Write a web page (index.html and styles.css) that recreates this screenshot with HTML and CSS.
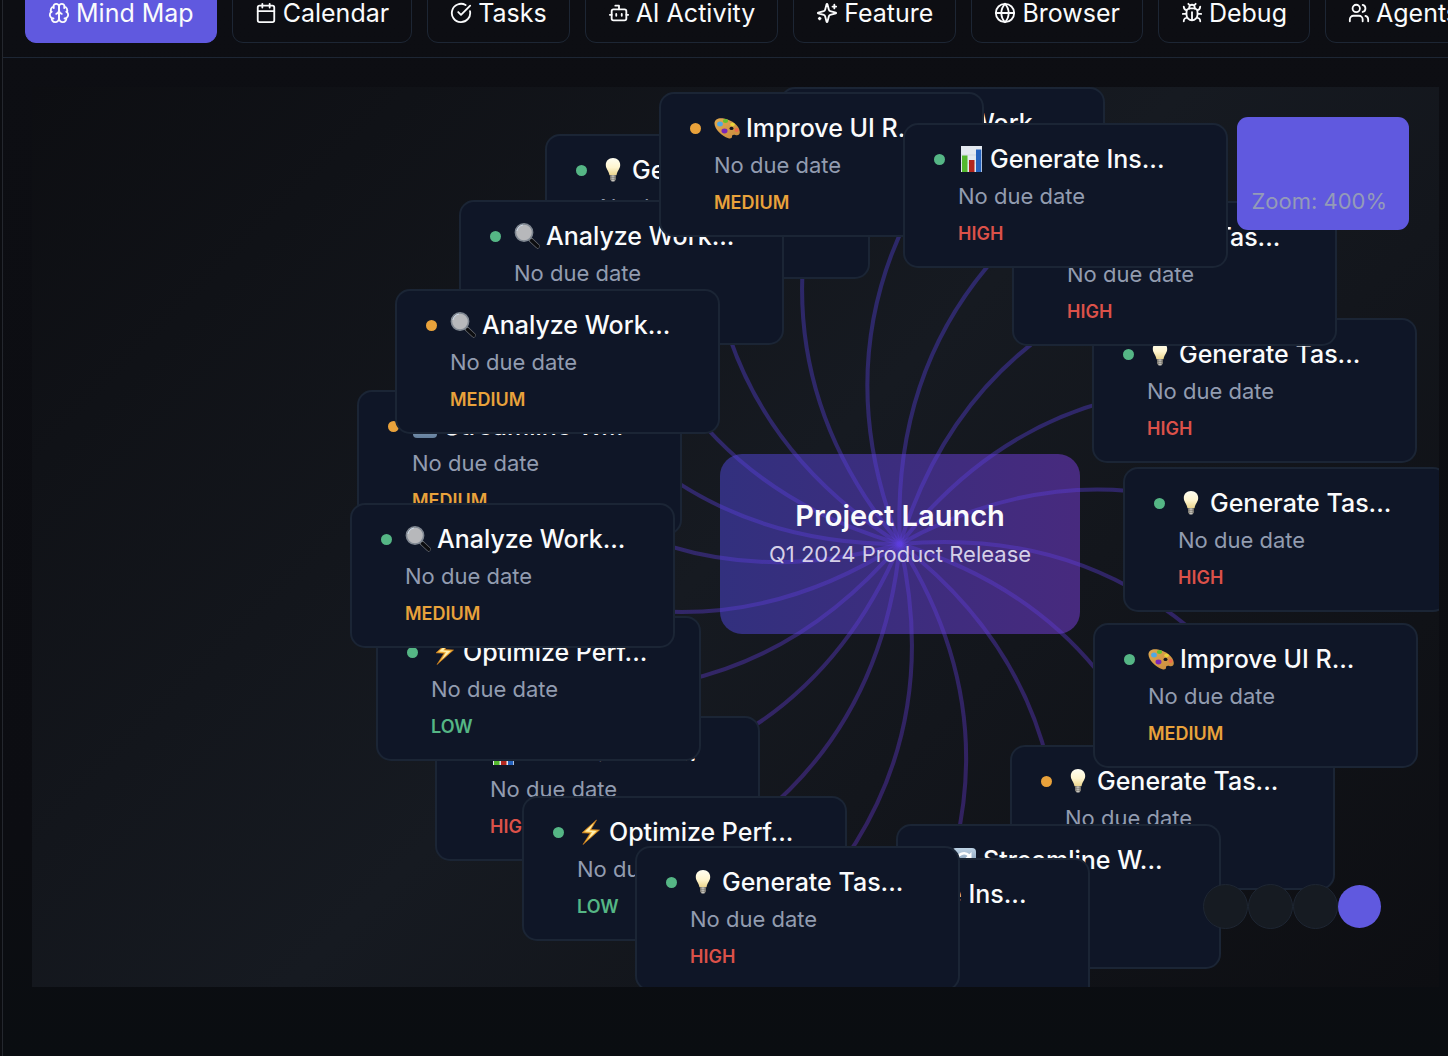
FILE: index.html
```html
<!DOCTYPE html>
<html lang="en">
<head>
<meta charset="utf-8">
<title>Mind Map</title>
<meta name="viewport" content="width=device-width, initial-scale=1">
<link rel="stylesheet" href="styles.css">
</head>
<body>
<svg class="defs" aria-hidden="true">
  <defs>
    <linearGradient id="glass" x1="0" y1="0" x2="0" y2="1"><stop offset="0" stop-color="#fffef2"/><stop offset=".55" stop-color="#fff5cf"/><stop offset="1" stop-color="#ecd58d"/></linearGradient>
    <linearGradient id="cap" x1="0" y1="0" x2="1" y2="0"><stop offset="0" stop-color="#77736a"/><stop offset=".5" stop-color="#d6d4cc"/><stop offset="1" stop-color="#6c6961"/></linearGradient>
    <linearGradient id="tile" x1="0" y1="0" x2="0" y2="1"><stop offset="0" stop-color="#bed3e6"/><stop offset="1" stop-color="#627d9b"/></linearGradient>
    <linearGradient id="wood" x1="0" y1="0" x2="1" y2="1"><stop offset="0" stop-color="#e0a94f"/><stop offset="1" stop-color="#c98b3d"/></linearGradient>
    <linearGradient id="spoke" gradientUnits="userSpaceOnUse" x1="0" y1="0" x2="0" y2="900"><stop offset="0" stop-color="#4c42e0"/><stop offset=".5" stop-color="#5d3ee0"/><stop offset="1" stop-color="#6a32c8"/></linearGradient>
    <symbol id="bulb" viewBox="0 0 26 26">
      <path d="M13 1C8.600 1 5.800 4.100 5.800 8c0 3.500 2.700 5.500 3.700 10.200h7C17.500 13.500 20.200 11.500 20.200 8 20.200 4.100 17.400 1 13 1z" fill="url(#glass)"/>
      <path d="M10 18.200h6v4.300l-1.600 2h-2.800l-1.600-2z" fill="url(#cap)"/>
      <path d="M10 20.300h6M10 22.300h6" stroke="#66635c" stroke-width=".6"/>
    </symbol>
    <symbol id="lens" viewBox="0 0 26 26">
      <path d="M16.500 16.500l7 6.700" stroke="#74777c" stroke-width="4.600" stroke-linecap="round"/>
      <path d="M17.500 17.500l6.200 5.800" stroke="#0c0d10" stroke-width="3.400" stroke-linecap="round"/>
      <circle cx="10" cy="9.500" r="8.600" fill="#b7b8bb" stroke="#808892" stroke-width="1.600"/>
      <path d="M3 8a7.600 7.600 0 0 1 6-6" stroke="#ccd8e6" stroke-width="1" fill="none"/>
    </symbol>
    <symbol id="chart" viewBox="0 0 26 26">
      <path d="M3 0h21v26H3z" fill="#e3e9f0"/>
      <path d="M3 9h21M3 17h21" stroke="#c9d2dc" stroke-width=".7"/>
      <path d="M4 9.500h5.500V26H4z" fill="#54b82e"/>
      <path d="M11 14h5.500v12H11z" fill="#b3261e"/>
      <path d="M18 3.500h5.300V26H18z" fill="#2562bd"/>
    </symbol>
    <symbol id="palette" viewBox="0 0 26 26">
      <path d="M.5 8.500C.5 4 5 2.500 10 3.500 18 5 25.800 11 25.800 17c0 3-2 3.800-4.500 3-2.200-.6-3.500.2-3.300 1.500.2 1.600-1.600 2.300-3.600 1.700C7.500 21 .5 14 .5 8.500z" fill="url(#wood)"/>
      <ellipse cx="6" cy="9" rx="2.900" ry="2.500" fill="#4fa8e4"/>
      <ellipse cx="11.500" cy="6" rx="2.600" ry="2" fill="#63c32f"/>
      <ellipse cx="18.500" cy="9.500" rx="2.300" ry="1.700" fill="#e8d43a"/>
      <ellipse cx="22.600" cy="15" rx="2" ry="1.900" fill="#ed6a4c"/>
      <ellipse cx="10.500" cy="16" rx="3" ry="2.400" fill="#7a27b8"/>
      <ellipse cx="17.500" cy="13.400" rx="2" ry="1.700" fill="#15151d"/>
    </symbol>
    <symbol id="bolt" viewBox="0 0 26 26">
      <path d="M19.500 1L5 13.800l8.200.4L6 25.500 22.500 11l-8.600-.5z" fill="#f4b63c" stroke="#c97a1c" stroke-width=".7"/>
      <path d="M16.500 4.500L8 12.600l7 .5-4 7.400 8.500-8.500-7.200-.5z" fill="#fff0b0"/>
    </symbol>
    <symbol id="cycle" viewBox="0 0 26 26">
      <rect x="1" y="1" width="24" height="24" rx="4" fill="url(#tile)"/>
      <path d="M6 14a7 7 0 0 1 12-5.500M20 12a7 7 0 0 1-12 5.500" fill="none" stroke="#fff" stroke-width="2.600"/>
      <path d="M20.500 5v6h-6zM5.500 21v-6h6z" fill="#fff"/>
    </symbol>
  </defs>
</svg>

<div class="app">
  <header class="topbar">
    <nav class="tabs" aria-label="Views">
      <button class="tab tab-active" type="button"><svg class="icon" viewBox="0 0 24 24"><path d="M12 5a3 3 0 1 0-5.997.125 4 4 0 0 0-2.526 5.770 4 4 0 0 0 .556 6.588A4 4 0 1 0 12 18Z"/><path d="M12 5a3 3 0 1 1 5.997.125 4 4 0 0 1 2.526 5.770 4 4 0 0 1-.556 6.588A4 4 0 1 1 12 18Z"/><path d="M15 13a4.500 4.500 0 0 1-3-4 4.500 4.500 0 0 1-3 4M17.599 6.500a3 3 0 0 0 .399-1.375M6.003 5.125A3 3 0 0 0 6.401 6.500M3.477 10.896a4 4 0 0 1 .585-.396M19.938 10.500a4 4 0 0 1 .585.396M6 18a4 4 0 0 1-1.967-.516M19.967 17.484A4 4 0 0 1 18 18"/></svg>Mind Map</button>
      <button class="tab" type="button"><svg class="icon" viewBox="0 0 24 24"><path d="M8 2v4M16 2v4M3 10h18"/><rect x="3" y="4" width="18" height="18" rx="2"/></svg>Calendar</button>
      <button class="tab" type="button"><svg class="icon" viewBox="0 0 24 24"><path d="M21.801 10A10 10 0 1 1 17 3.335"/><path d="m9 11 3 3L22 4"/></svg>Tasks</button>
      <button class="tab" type="button"><svg class="icon" viewBox="0 0 24 24"><path d="M12 8V4H8"/><rect x="4" y="8" width="16" height="12" rx="2"/><path d="M2 14h2M20 14h2M15 13v2M9 13v2"/></svg>AI Activity</button>
      <button class="tab" type="button"><svg class="icon" viewBox="0 0 24 24"><path d="M9.937 15.500A2 2 0 0 0 8.500 14.063l-6.135-1.582a.5.5 0 0 1 0-.962L8.500 9.936A2 2 0 0 0 9.937 8.500l1.582-6.135a.5.5 0 0 1 .963 0L14.063 8.500A2 2 0 0 0 15.500 9.937l6.135 1.581a.5.5 0 0 1 0 .964L15.500 14.063a2 2 0 0 0-1.437 1.437l-1.582 6.135a.5.5 0 0 1-.963 0z"/><path d="M20 3v4M22 5h-4M4 17v2M5 18H3"/></svg>Feature</button>
      <button class="tab" type="button"><svg class="icon" viewBox="0 0 24 24"><circle cx="12" cy="12" r="10"/><path d="M12 2a14.500 14.500 0 0 0 0 20 14.500 14.500 0 0 0 0-20M2 12h20"/></svg>Browser</button>
      <button class="tab" type="button"><svg class="icon" viewBox="0 0 24 24"><path d="m8 2 1.880 1.880M14.120 3.880 16 2M9 7.130v-1a3.003 3.003 0 1 1 6 0v1"/><path d="M12 20c-3.300 0-6-2.700-6-6v-3a4 4 0 0 1 4-4h4a4 4 0 0 1 4 4v3c0 3.300-2.700 6-6 6M12 20v-9M6.530 9C4.600 8.800 3 7.100 3 5M6 13H2M3 21c0-2.100 1.700-3.900 3.800-4M20.970 5c0 2.100-1.600 3.800-3.500 4M22 13h-4M17.200 17c2.100.1 3.800 1.900 3.800 4"/></svg>Debug</button>
      <button class="tab" type="button"><svg class="icon" viewBox="0 0 24 24"><path d="M16 21v-2a4 4 0 0 0-4-4H6a4 4 0 0 0-4 4v2"/><circle cx="9" cy="7" r="4"/><path d="M22 21v-2a4 4 0 0 0-3-3.870M16 3.130a4 4 0 0 1 0 7.750"/></svg>Agents</button>
    </nav>
  </header>

  <main class="main">
    <div class="canvas">
      <section class="root-node" style="left:688px;top:367px">
        <h1 class="root-title">Project Launch</h1>
        <p class="root-text">Q1 2024 Product Release</p>
      </section>
      <svg class="spokes" aria-hidden="true">
        <path d="M868 457Q681 340 675 119"/>
        <path d="M868 457Q655 396 588 185"/>
        <path d="M868 457Q647 457 525 273"/>
        <path d="M868 457Q655 518 487 374"/>
        <path d="M868 457Q682 576 480 487"/>
        <path d="M868 457Q725 626 506 600"/>
        <path d="M868 457Q782 660 565 700"/>
        <path d="M868 457Q846 677 651 780"/>
        <path d="M868 457Q917 672 765 831"/>
        <path d="M868 457Q985 642 895 842"/>
        <path d="M868 457Q1041 591 1026 809"/>
        <path d="M868 457Q1077 520 1140 729"/>
        <path d="M868 457Q1085 437 1222 607"/>
        <path d="M868 457Q1059 351 1253 451"/>
        <path d="M868 457Q1003 285 1221 302"/>
        <path d="M868 457Q932 248 1142 185"/>
        <path d="M868 457Q857 238 1033 107"/>
        <path d="M868 457Q786 253 910 72"/>
        <path d="M868 457Q727 288 789 77"/>
      </svg>

      <article class="card done" style="left:1060px;top:231px"><h2 class="card-title"><svg class="emoji"><use href="#bulb"/></svg>Generate Tas...</h2><p class="due">No due date</p><p class="priority high">HIGH</p></article>
      <article class="card done" style="left:980px;top:114px"><h2 class="card-title"><svg class="emoji"><use href="#bulb"/></svg>Generate Tas...</h2><p class="due">No due date</p><p class="priority high">HIGH</p></article>
      <article class="card done" style="left:748px;top:0px"><h2 class="card-title"><svg class="emoji"><use href="#lens"/></svg>Analyze Work...</h2><p class="due">No due date</p><p class="priority medium">MEDIUM</p></article>
      <article class="card done" style="left:513px;top:47px"><h2 class="card-title"><svg class="emoji"><use href="#bulb"/></svg>Generate Tas...</h2><p class="due">No due date</p><p class="priority high">HIGH</p></article>
      <article class="card done" style="left:427px;top:113px"><h2 class="card-title"><svg class="emoji"><use href="#lens"/></svg>Analyze Work...</h2><p class="due">No due date</p><p class="priority medium">MEDIUM</p></article>
      <article class="card pending" style="left:627px;top:5px"><h2 class="card-title"><svg class="emoji"><use href="#palette"/></svg>Improve UI R...</h2><p class="due">No due date</p><p class="priority medium">MEDIUM</p></article>
      <article class="card done" style="left:871px;top:36px"><h2 class="card-title"><svg class="emoji"><use href="#chart"/></svg>Generate Ins...</h2><p class="due">No due date</p><p class="priority high">HIGH</p></article>
      <article class="card pending" style="left:325px;top:303px"><h2 class="card-title"><svg class="emoji"><use href="#cycle"/></svg>Streamline W...</h2><p class="due">No due date</p><p class="priority medium">MEDIUM</p></article>
      <article class="card pending" style="left:363px;top:202px"><h2 class="card-title"><svg class="emoji"><use href="#lens"/></svg>Analyze Work...</h2><p class="due">No due date</p><p class="priority medium">MEDIUM</p></article>
      <article class="card done" style="left:403px;top:629px"><h2 class="card-title"><svg class="emoji"><use href="#chart"/></svg>Generate Ins...</h2><p class="due">No due date</p><p class="priority high">HIGH</p></article>
      <article class="card done" style="left:344px;top:529px"><h2 class="card-title"><svg class="emoji"><use href="#bolt"/></svg>Optimize Perf...</h2><p class="due">No due date</p><p class="priority low">LOW</p></article>
      <article class="card done" style="left:318px;top:416px"><h2 class="card-title"><svg class="emoji"><use href="#lens"/></svg>Analyze Work...</h2><p class="due">No due date</p><p class="priority medium">MEDIUM</p></article>
      <article class="card done" style="left:490px;top:709px"><h2 class="card-title"><svg class="emoji"><use href="#bolt"/></svg>Optimize Perf...</h2><p class="due">No due date</p><p class="priority low">LOW</p></article>
      <article class="card pending" style="left:978px;top:658px"><h2 class="card-title"><svg class="emoji"><use href="#bulb"/></svg>Generate Tas...</h2><p class="due">No due date</p><p class="priority high">HIGH</p></article>
      <article class="card done" style="left:864px;top:737px"><h2 class="card-title"><svg class="emoji"><use href="#cycle"/></svg>Streamline W...</h2><p class="due">No due date</p><p class="priority medium">MEDIUM</p></article>
      <article class="card done" style="left:733px;top:771px"><h2 class="card-title"><svg class="emoji"><use href="#chart"/></svg>Generate Ins...</h2><p class="due">No due date</p><p class="priority high">HIGH</p></article>
      <article class="card done" style="left:603px;top:759px"><h2 class="card-title"><svg class="emoji"><use href="#bulb"/></svg>Generate Tas...</h2><p class="due">No due date</p><p class="priority high">HIGH</p></article>
      <article class="card done" style="left:1061px;top:536px"><h2 class="card-title"><svg class="emoji"><use href="#palette"/></svg>Improve UI R...</h2><p class="due">No due date</p><p class="priority medium">MEDIUM</p></article>
      <article class="card done" style="left:1091px;top:380px"><h2 class="card-title"><svg class="emoji"><use href="#bulb"/></svg>Generate Tas...</h2><p class="due">No due date</p><p class="priority high">HIGH</p></article>

      <div class="zoom-panel">Zoom: 400%</div>
      <div class="view-modes">
        <button class="mode" type="button" aria-label="Radial layout"></button>
        <button class="mode" type="button" aria-label="Tree layout"></button>
        <button class="mode" type="button" aria-label="Fit to view"></button>
        <button class="mode mode-add" type="button" aria-label="Add node"></button>
      </div>
    </div>
  </main>
</div>
</body>
</html>
```
FILE: styles.css
```css
* { box-sizing: border-box; }

body {
  margin: 0;
  background: #0b0c10;
  color: #fafbfc;
  font-family: Inter, "Liberation Sans", sans-serif;
}

h1, h2, p { margin: 0; }

.defs {
  position: absolute;
  width: 0;
  height: 0;
}

.app {
  min-height: 100vh;
  margin-left: 2px;
  border-left: 1px solid #24272e;
  background: linear-gradient(#0d0e13, #0c0d12 80%, #0a0d11);
  overflow: hidden;
}

/* Top bar: the tab strip hangs from its bottom edge */
.topbar {
  display: flex;
  align-items: flex-end;
  height: 58px;
  padding: 0 22px 14px;
  border-bottom: 1px solid #1d2634;
  overflow: hidden;
}

.tabs {
  display: flex;
  gap: 15px;
}

.tab {
  display: flex;
  flex: none;
  align-items: center;
  gap: 6px;
  height: 58px;
  padding: 0 22px 2px;
  border: 1px solid #1d2634;
  border-radius: 11px;
  background: transparent;
  color: #fafbfc;
  font: 400 25px/36px Inter, "Liberation Sans", sans-serif;
  white-space: nowrap;
}

.tab-active {
  border-color: #6059df;
  background: #6059df;
}

.icon {
  width: 22px;
  height: 22px;
  fill: none;
  stroke: currentColor;
  stroke-width: 2;
  stroke-linecap: round;
  stroke-linejoin: round;
}

.main { padding: 29px 9px 69px 29px; }

/* Mind map canvas */
.canvas {
  position: relative;
  height: 900px;
  overflow: hidden;
  background: linear-gradient(135deg, #0d0e12, #161a21 50%, #0d0e12);
}

.spokes {
  position: absolute;
  inset: 0;
  width: 100%;
  height: 100%;
  fill: none;
  stroke: url(#spoke);
  stroke-width: 4;
}

.spokes path { stroke-opacity: 0.38; }

.root-node {
  position: absolute;
  width: 360px;
  padding: 42px 20px 62px;
  border-radius: 22px;
  background: linear-gradient(to right, #32307e, #472a7e);
  text-align: center;
}

.root-title,
.root-text {
  position: relative;
  z-index: 1;
}

.root-title {
  font-size: 29px;
  font-weight: 600;
  line-height: 40px;
}

.root-text {
  color: #d5d0e8;
  font-size: 22px;
  line-height: 36px;
}

.card {
  position: absolute;
  width: 325px;
  padding: 15px 16px 14px 53px;
  border: 2px solid #1b2535;
  border-radius: 15px;
  background: #0f1627;
  white-space: nowrap;
}

.card::before {
  content: "";
  position: absolute;
  top: 29px;
  left: 29px;
  width: 11px;
  height: 11px;
  border-radius: 50%;
}

.done::before { background: #55b685; }
.pending::before { background: #e9a23b; }

.card-title {
  display: flex;
  align-items: center;
  gap: 6px;
  font-size: 25px;
  font-weight: 500;
  line-height: 38px;
}

.emoji {
  flex: none;
  width: 26px;
  height: 26px;
}

.due {
  color: #929cb0;
  font-size: 22px;
  line-height: 37px;
}

.priority {
  font-size: 18px;
  font-weight: 600;
  line-height: 37px;
}

.high { color: #dc5149; }
.medium { color: #e9a23b; }
.low { color: #55b685; }

/* Floating controls */
.zoom-panel {
  position: absolute;
  top: 30px;
  right: 30px;
  padding: 69px 22px 14px 14px;
  border-radius: 11px;
  background: #6059df;
  color: #949bb8;
  font-size: 22px;
  line-height: 30px;
}

.view-modes {
  position: absolute;
  right: 58px;
  bottom: 58px;
  display: flex;
  align-items: center;
}

.mode {
  width: 45px;
  height: 45px;
  padding: 0;
  border: 1px solid #1e2633;
  border-radius: 50%;
  background: #161b22;
}

.mode-add {
  width: 43px;
  height: 43px;
  border: 0;
  background: #6059df;
}
```
